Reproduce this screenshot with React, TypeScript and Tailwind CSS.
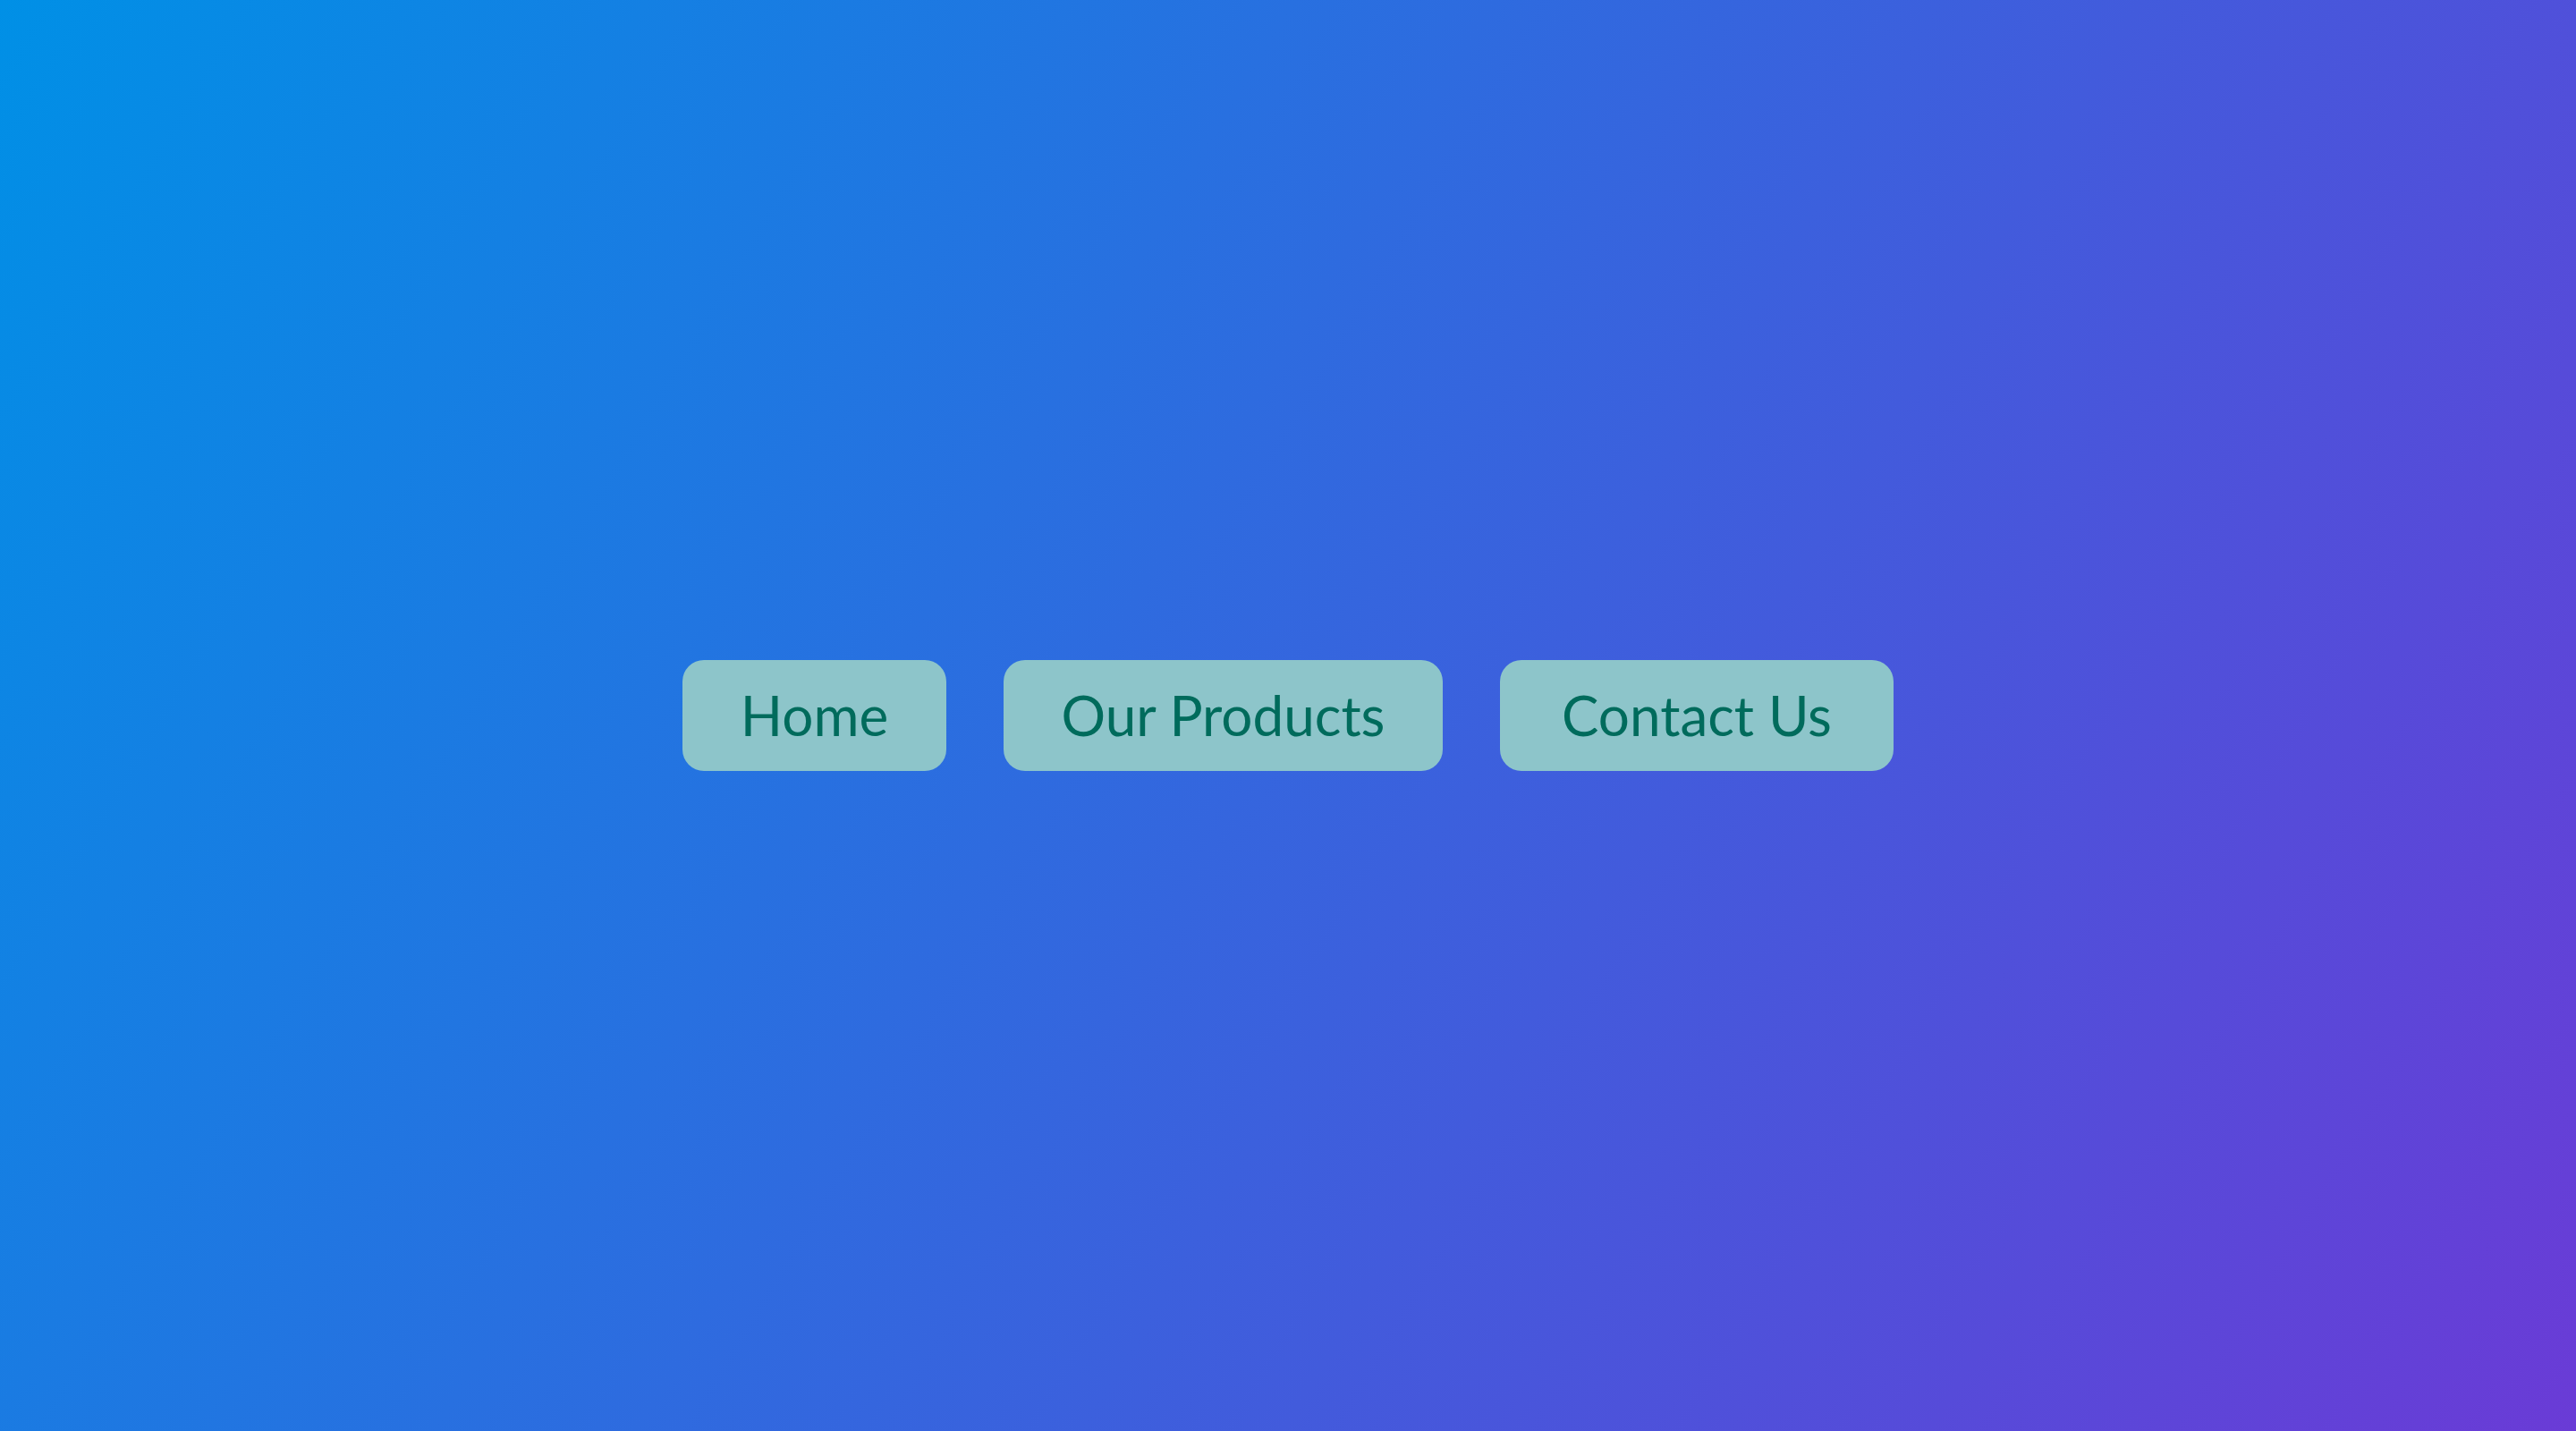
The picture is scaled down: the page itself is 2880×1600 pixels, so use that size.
const links = [
  { label: "Home", width: "w-[295px]" },
  { label: "Our Products", width: "w-[491px]" },
  { label: "Contact Us", width: "w-[440px]" },
];

export default function App() {
  return (
    <div className="flex min-h-screen w-full items-center justify-center bg-[linear-gradient(121deg,#0090e6,#6a3bd6)]">
      <nav className="flex items-center gap-16">
        {links.map((link) => (
          <a
            key={link.label}
            href="#"
            className={`flex h-[124px] items-center justify-center rounded-3xl bg-[#8dc5ca] pb-[2px] text-[62px] leading-none font-normal text-[#006b5c] [font-family:Lato,'Open_Sans',sans-serif] ${link.width}`}
          >
            {link.label}
          </a>
        ))}
      </nav>
    </div>
  );
}
